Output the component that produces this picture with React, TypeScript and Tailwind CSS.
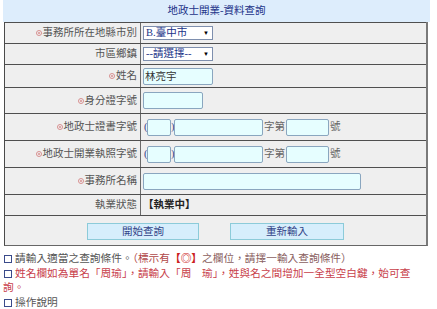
import React from "react";

const font = {
  fontFamily: '"Liberation Serif", "Noto Sans CJK TC", serif',
};

const Bullet = () => (
  <span className="inline-flex items-center justify-center w-[6px] h-[6px] rounded-full border border-[#d89090] mr-[1px]">
    <span className="w-[2px] h-[2px] rounded-full bg-[#d89090]" />
  </span>
);

const Box = () => (
  <span className="inline-block w-[8px] h-[8px] border border-[#3a4a8a] mr-[3px] ml-[1px] align-[-1px]" />
);

const Input = ({ w, value }: { w: string; value?: string }) => (
  <div
    className={`${w} h-[17px] bg-[#e6feff] border border-[#8aa6bf] rounded-[2px] text-[10.5px] leading-[15px] pl-[1px] text-[#333]`}
  >
    {value}
  </div>
);

const Select = ({ text }: { text: string }) => (
  <div className="w-[70px] h-[14px] bg-white border border-[#7e8fae] flex items-center justify-between pl-[2px] pr-[3px]">
    <span className="text-[10.5px] leading-[12px] text-[#223388]">{text}</span>
    <span className="text-[6px] text-black leading-none">▼</span>
  </div>
);

const Row = ({
  h,
  label,
  bullet,
  children,
}: {
  h: string;
  label: string;
  bullet?: boolean;
  children?: React.ReactNode;
}) => (
  <div className={`flex ${h} border-t border-[#4f4f4f]`}>
    <div className="w-[135px] flex items-center justify-end pr-[3px] text-[10.5px] text-[#555]">
      {bullet && <Bullet />}
      <span>{label}</span>
    </div>
    <div className="flex-1 flex items-center pl-[2px] border-l border-[#6a6a6a]">
      {children}
    </div>
  </div>
);

const NumberFields = () => (
  <div className="flex items-center text-[10.5px] text-[#666]">
    <span className="w-[4px] pl-[1px] text-[#334488]">(</span>
    <Input w="w-[24px]" />
    <span className="w-[3px] text-[#334488]">)</span>
    <Input w="w-[89px]" />
    <span className="px-[1px]">字第</span>
    <Input w="w-[43px]" />
    <span className="pl-[1px]">號</span>
  </div>
);

export default function App() {
  return (
    <div className="w-[437px] h-[309px] bg-white overflow-hidden" style={font}>
      <div className="pl-[3px]">
        <div className="w-[427px] h-[22px] bg-[#ddedfc] flex items-center justify-center text-[10.5px] text-[#223388]">
          地政士開業-資料查詢
        </div>
      </div>
      <div className="ml-[4px] w-[424px] bg-[#efefef] border-l border-[#4a4a4a] border-r-2 border-r-[#7a7a7a] border-b border-b-[#666]">
        <Row h="h-[21px]" label="事務所所在地縣市別" bullet>
          <Select text="B.臺中市" />
        </Row>
        <Row h="h-[21px]" label="市區鄉鎮">
          <Select text="--請選擇--" />
        </Row>
        <Row h="h-[23px]" label="姓名" bullet>
          <Input w="w-[70px]" value="林亮宇" />
        </Row>
        <Row h="h-[26px]" label="身分證字號" bullet>
          <Input w="w-[60px]" />
        </Row>
        <Row h="h-[27px]" label="地政士證書字號" bullet>
          <NumberFields />
        </Row>
        <Row h="h-[27px]" label="地政士開業執照字號" bullet>
          <NumberFields />
        </Row>
        <Row h="h-[27px]" label="事務所名稱" bullet>
          <Input w="w-[218px]" />
        </Row>
        <Row h="h-[21px]" label="執業狀態">
          <span className="text-[10.5px] font-bold text-[#222]">【執業中】</span>
        </Row>
        <div className="h-[30px] border-t border-[#4f4f4f] flex items-center justify-center gap-[31px] pt-[2px]">
          <div className="w-[112px] h-[17px] bg-[#d6eefc] border border-[#8ccbd9] flex items-center justify-center text-[10.5px] text-[#334488]">
            開始查詢
          </div>
          <div className="w-[114px] h-[17px] bg-[#d6eefc] border border-[#8ccbd9] flex items-center justify-center text-[10.5px] text-[#334488]">
            重新輸入
          </div>
        </div>
      </div>
      <div className="pt-[5px] pl-[3px] w-[423px] text-[10.7px] leading-[14.5px]">
        <div className="text-[#555]">
          <Box />
          請輸入適當之查詢條件。
          <span className="text-[#b04848]">（標示有</span>
          <span className="text-[#cc2020] font-bold">【◎】</span>
          <span className="text-[#8a6060]">之欄位，請擇一輸入查詢條件）</span>
        </div>
        <div className="text-[#c8404a]">
          <Box />
          姓名欄如為單名「周瑜」，請輸入「周　瑜」，姓與名之間增加一全型空白鍵，始可查詢。
        </div>
        <div className="text-[#555]">
          <Box />
          操作說明
        </div>
      </div>
    </div>
  );
}
